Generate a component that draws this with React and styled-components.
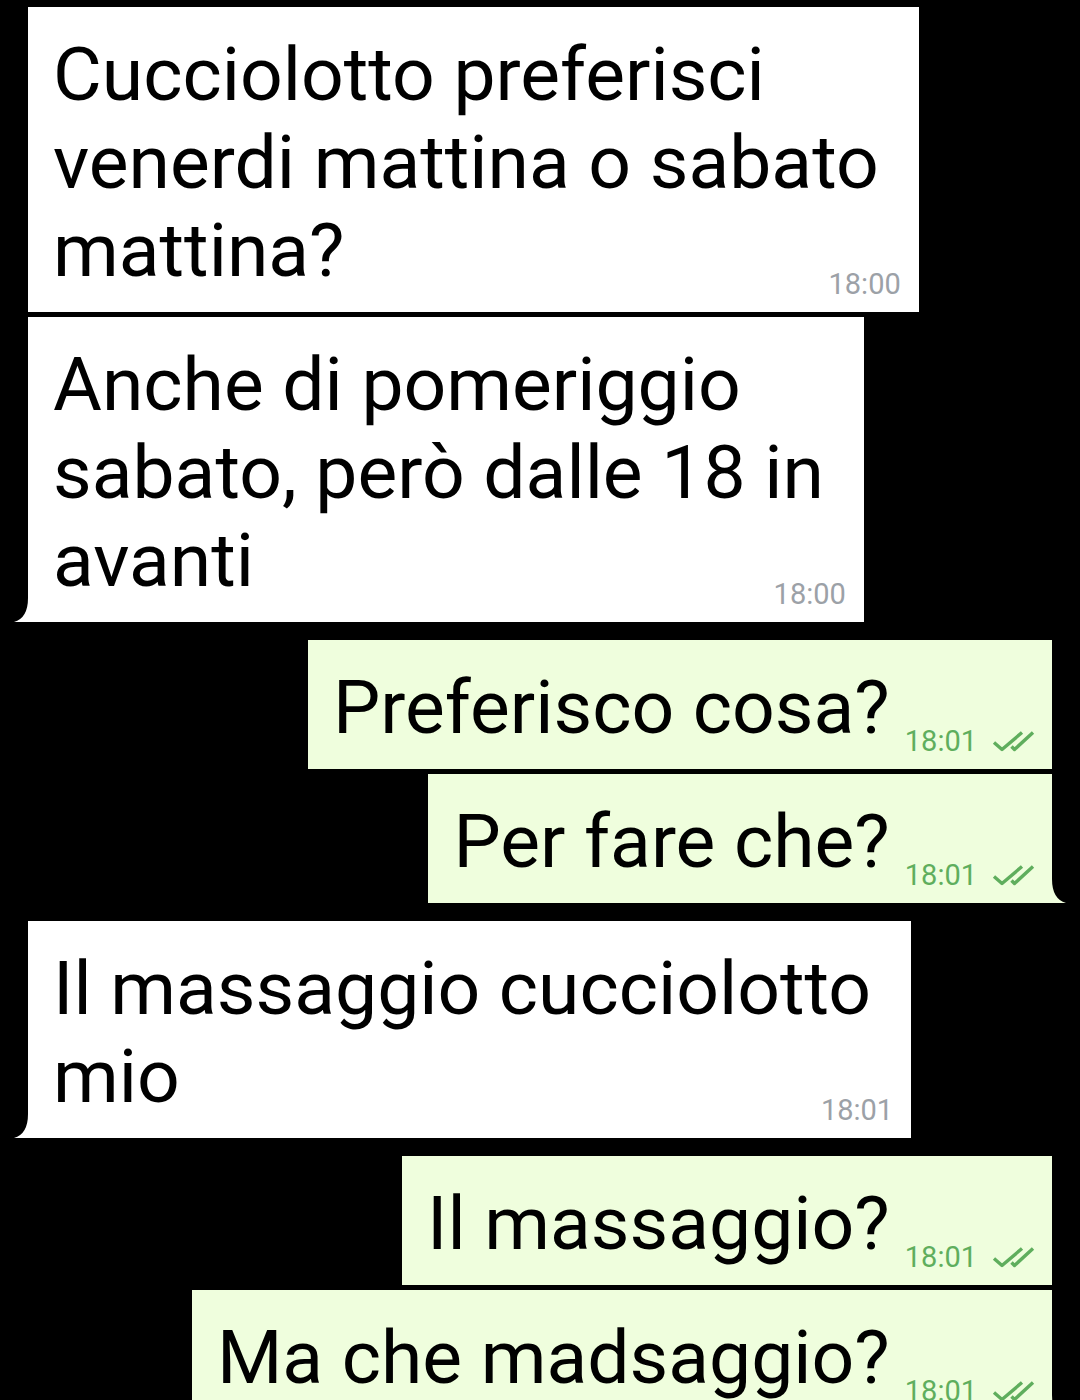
import React from "react";
import styled, { createGlobalStyle, css } from "styled-components";

const Global = createGlobalStyle`
  html, body { margin: 0; padding: 0; background: #000; }
  body { font-family: Roboto, "Noto Sans", "Liberation Sans", sans-serif; overflow: hidden; }
`;

const Page = styled.div`
  background: #000;
  min-height: 1400px;
  padding: 7px 28px 0 28px;
  display: flex;
  flex-direction: column;
  box-sizing: border-box;
`;

const Row = styled.div`
  display: flex;
  justify-content: ${(p) => (p.$side === "out" ? "flex-end" : "flex-start")};
  margin-top: ${(p) => (p.$first ? "0" : p.$newGroup ? "18px" : "5px")};
`;

const Bubble = styled.div`
  position: relative;
  box-sizing: border-box;
  background: ${(p) => (p.$side === "out" ? "#effedd" : "#ffffff")};
  ${(p) =>
    p.$side === "out"
      ? css`
          padding: 23px 17px 18px 25px;
          display: flex;
          align-items: flex-end;
          gap: 15px;
        `
      : css`
          padding: 23px 40px 18px 25px;
          display: grid;
        `}
`;

const Text = styled.div`
  grid-area: 1 / 1;
  font-size: 75px;
  line-height: 88px;
  color: #000;
  white-space: pre;
`;

const Meta = styled.div`
  grid-area: 1 / 1;
  justify-self: end;
  align-self: end;
  display: flex;
  align-items: center;
  gap: 15px;
  font-size: 29px;
  line-height: 28px;
  white-space: nowrap;
  ${(p) =>
    p.$side === "out"
      ? css`
          color: #5fae5d;
          margin-bottom: -4px;
        `
      : css`
          color: #9ca1a7;
          margin-bottom: -4px;
          margin-right: -22px;
        `}
`;

const Tail = styled.svg`
  position: absolute;
  bottom: 0;
  width: 14px;
  height: 24px;
  ${(p) =>
    p.$side === "out"
      ? css`
          right: -14px;
          transform: scaleX(-1);
        `
      : css`
          left: -14px;
        `}
`;

const Checks = () => (
  <svg width="43" height="21" viewBox="0 0 43 21" fill="none">
    <path d="M2 11.5 L10 18.5 L30 1.5" stroke="#5fae5d" strokeWidth="3.4" strokeLinejoin="round" />
    <path d="M19.5 15.5 L22.5 18.5 L41 1.5" stroke="#5fae5d" strokeWidth="3.4" strokeLinejoin="round" />
  </svg>
);

const messages = [
  { side: "in", text: "Cucciolotto preferisci\nvenerdi mattina o sabato\nmattina?", time: "18:00" },
  { side: "in", text: "Anche di pomeriggio\nsabato, però dalle 18 in\navanti", time: "18:00", tail: true },
  { side: "out", text: "Preferisco cosa?", time: "18:01" },
  { side: "out", text: "Per fare che?", time: "18:01", tail: true },
  { side: "in", text: "Il massaggio cucciolotto\nmio", time: "18:01", tail: true },
  { side: "out", text: "Il massaggio?", time: "18:01" },
  { side: "out", text: "Ma che madsaggio?", time: "18:01", tail: true },
];

export default function App() {
  return (
    <>
      <Global />
      <Page>
        {messages.map((m, i) => {
          const prev = messages[i - 1];
          return (
            <Row key={i} $side={m.side} $first={i === 0} $newGroup={prev && prev.side !== m.side}>
              <Bubble $side={m.side}>
                <Text>{m.text}</Text>
                <Meta $side={m.side}>
                  <span>{m.time}</span>
                  {m.side === "out" && <Checks />}
                </Meta>
                {m.tail && (
                  <Tail $side={m.side} viewBox="0 0 14 24">
                    <path d="M14 0 Q14 20 0 24 L14 24 Z" fill={m.side === "out" ? "#effedd" : "#ffffff"} />
                  </Tail>
                )}
              </Bubble>
            </Row>
          );
        })}
      </Page>
    </>
  );
}
